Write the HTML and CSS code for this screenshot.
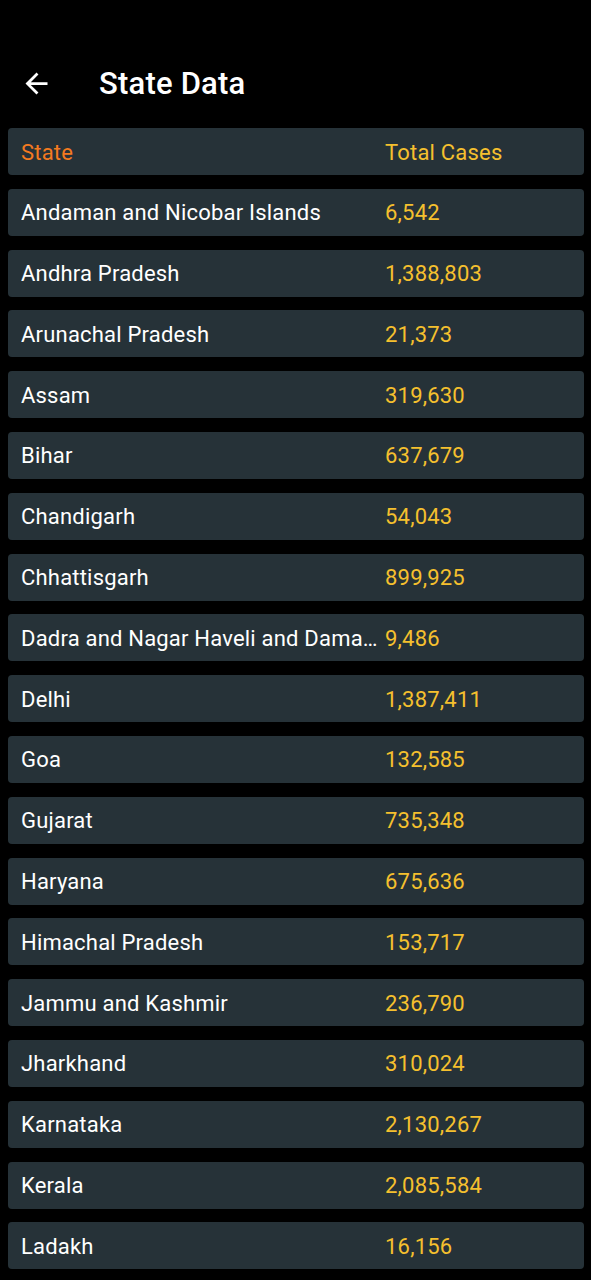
FILE: index.html
```html
<!DOCTYPE html>
<html>
<head>
<meta charset="utf-8">
<link rel="stylesheet" href="styles.css">
</head>
<body>
<header class="appbar">
  <svg class="back" viewBox="0 0 24 24" width="33" height="33"><path fill="#fff" d="M20 11H7.83l5.59-5.59L12 4l-8 8 8 8 1.41-1.41L7.83 13H20v-2z"/></svg>
  <h1 class="title">State Data</h1>
</header>
<main class="list">
  <div class="row head"><span class="state">State</span><span class="cases">Total Cases</span></div>
  <div class="row"><span class="state">Andaman and Nicobar Islands</span><span class="cases">6,542</span></div>
  <div class="row"><span class="state">Andhra Pradesh</span><span class="cases">1,388,803</span></div>
  <div class="row"><span class="state">Arunachal Pradesh</span><span class="cases">21,373</span></div>
  <div class="row"><span class="state">Assam</span><span class="cases">319,630</span></div>
  <div class="row"><span class="state">Bihar</span><span class="cases">637,679</span></div>
  <div class="row"><span class="state">Chandigarh</span><span class="cases">54,043</span></div>
  <div class="row"><span class="state">Chhattisgarh</span><span class="cases">899,925</span></div>
  <div class="row"><span class="state">Dadra and Nagar Haveli and Daman and Diu</span><span class="cases">9,486</span></div>
  <div class="row"><span class="state">Delhi</span><span class="cases">1,387,411</span></div>
  <div class="row"><span class="state">Goa</span><span class="cases">132,585</span></div>
  <div class="row"><span class="state">Gujarat</span><span class="cases">735,348</span></div>
  <div class="row"><span class="state">Haryana</span><span class="cases">675,636</span></div>
  <div class="row"><span class="state">Himachal Pradesh</span><span class="cases">153,717</span></div>
  <div class="row"><span class="state">Jammu and Kashmir</span><span class="cases">236,790</span></div>
  <div class="row"><span class="state">Jharkhand</span><span class="cases">310,024</span></div>
  <div class="row"><span class="state">Karnataka</span><span class="cases">2,130,267</span></div>
  <div class="row"><span class="state">Kerala</span><span class="cases">2,085,584</span></div>
  <div class="row"><span class="state">Ladakh</span><span class="cases">16,156</span></div>
</main>
</body>
</html>
```
FILE: styles.css
```css
html, body {
  margin: 0;
  padding: 0;
  background: #000;
  font-family: Roboto, "Liberation Sans", sans-serif;
  overflow: hidden;
}
.appbar {
  height: 127px;
  display: flex;
  align-items: center;
  padding: 39px 0 0 20px;
  box-sizing: border-box;
}
.back {
  display: block;
  flex: 0 0 auto;
}
.title {
  margin: 0 0 0 46px;
  color: #fff;
  font-size: 31px;
  font-weight: 500;
  letter-spacing: 0.2px;
}
.list {
  padding: 1px 7px 0 8px;
  display: flex;
  flex-direction: column;
  gap: 13.8px;
}
.row {
  height: 47px;
  flex: 0 0 auto;
  background: #263238;
  border-radius: 4px;
  display: grid;
  grid-template-columns: 360px 1fr;
  column-gap: 4px;
  align-items: center;
  padding: 1px 0 0 13px;
  box-sizing: border-box;
  font-size: 22px;
  letter-spacing: 0.2px;
}
.state {
  color: #fff;
  white-space: nowrap;
  overflow: hidden;
  text-overflow: ellipsis;
}
.cases {
  color: #f5c02e;
}
.head .state {
  color: #f47a20;
}
.head .cases {
  color: #f5c02e;
}
```
